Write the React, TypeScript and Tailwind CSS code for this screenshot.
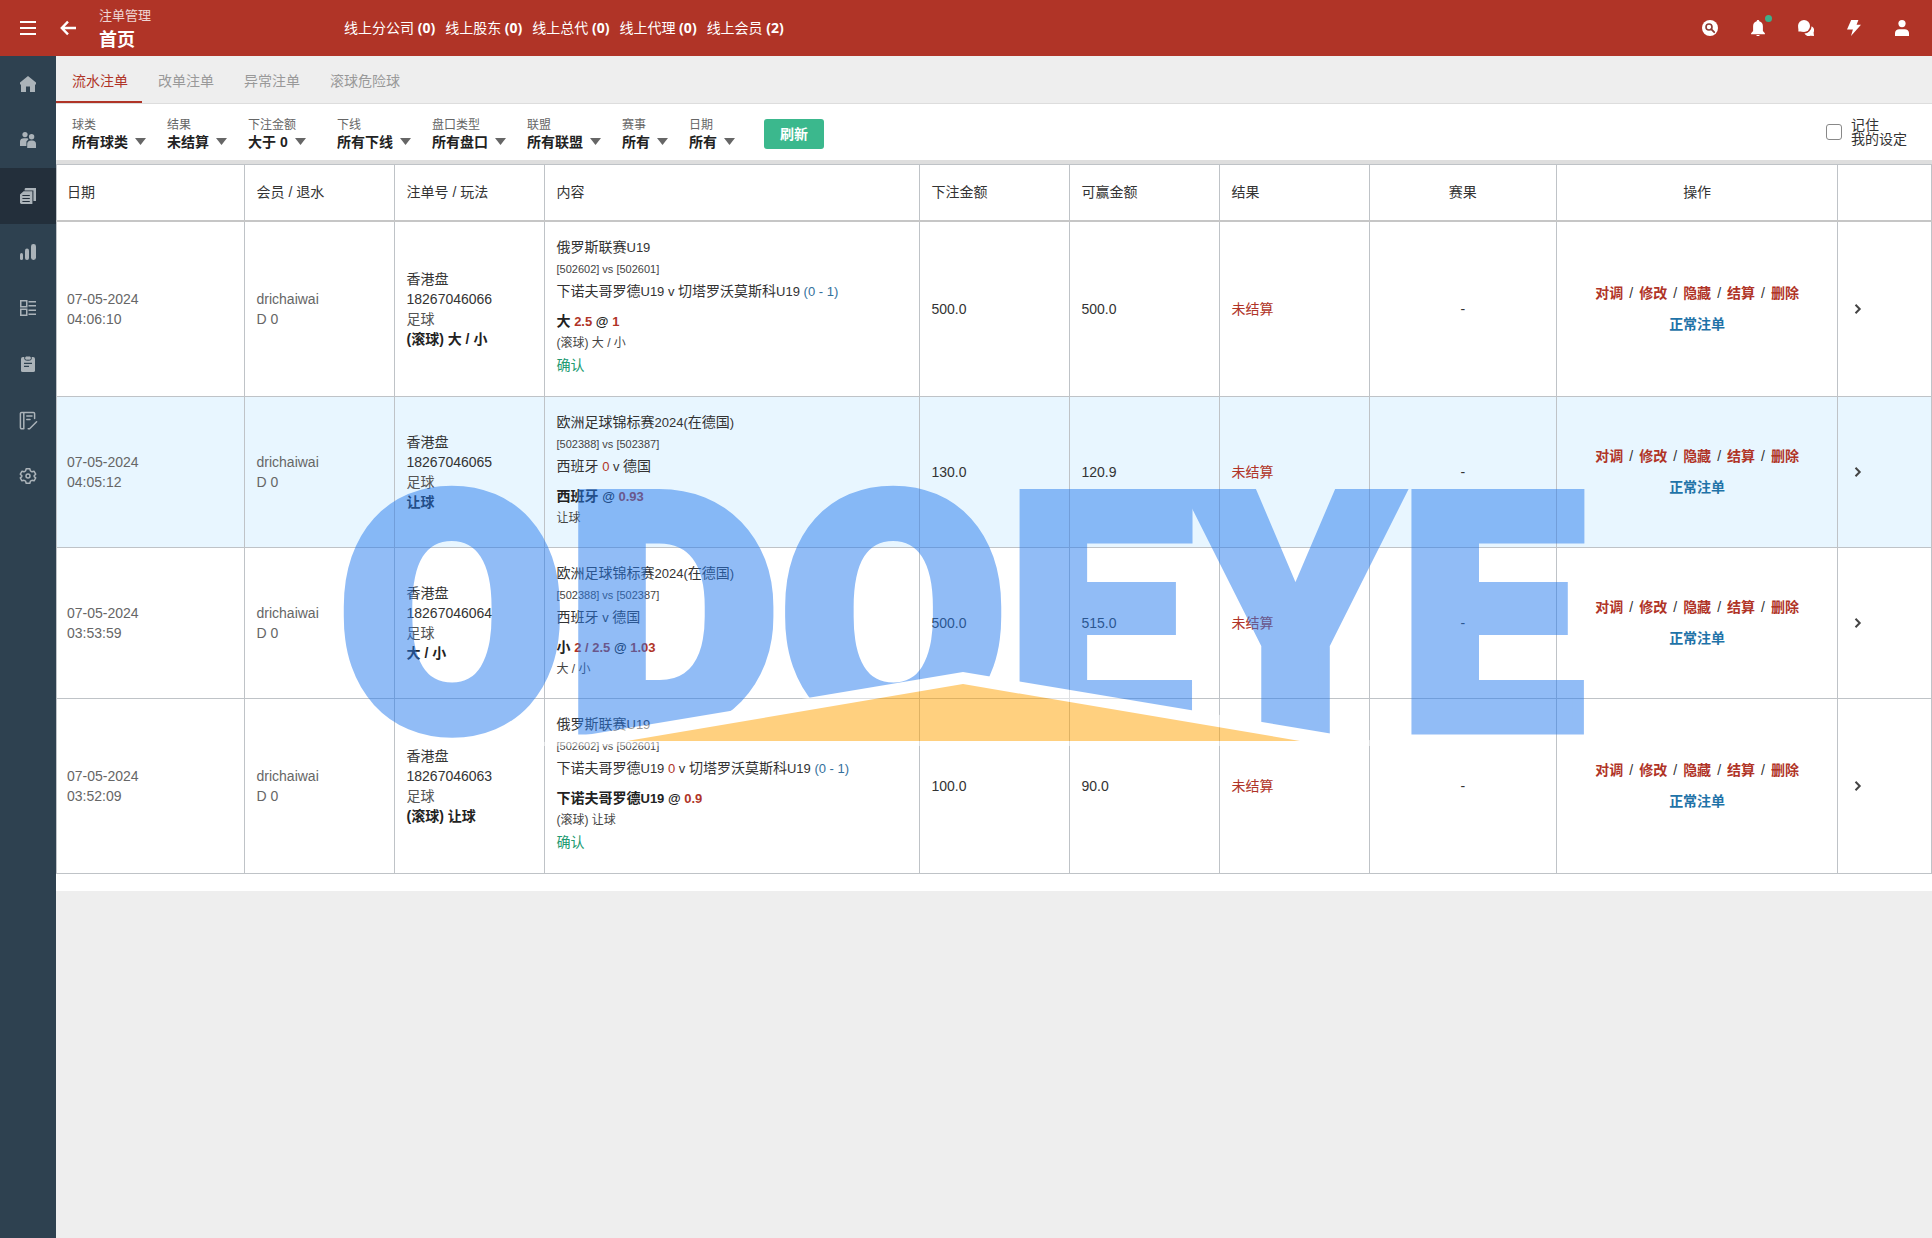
import type { ReactNode } from 'react';

const CJK = /([\u3000-\u9fff]+)/;

/* Chinese runs keep the base size, Latin runs and digits are set one step smaller. */
function Mixed({ children }: { children: string }) {
  return (
    <>
      {children.split(CJK).map((part, i) =>
        part === '' ? null : i % 2 === 1 ? (
          part
        ) : (
          <span key={i} className="text-[13px] leading-none">
            {part}
          </span>
        ),
      )}
    </>
  );
}

function Icon({ children, size = 16 }: { children: ReactNode; size?: number }) {
  return (
    <svg width={size} height={size} viewBox={`0 0 ${size} ${size}`} fill="none" aria-hidden="true">
      {children}
    </svg>
  );
}

const sideItems: { label: string; active?: boolean; icon: ReactNode }[] = [
  {
    label: '首页',
    icon: <path fill="currentColor" d="M8 0 16 6.6V8.4H15V16H10V10.5H6V16H1V8.4H0V6.6Z" />,
  },
  {
    label: '会员',
    icon: (
      <g fill="currentColor">
        <circle cx="5" cy="2.6" r="2.6" />
        <circle cx="11.6" cy="4.8" r="2.7" />
        <path d="M0 14V9.5C0 7.4 1.7 6.2 4 6.2H6.6C7.6 6.2 8.2 6.6 8.4 7.2L6.4 9.4V14Z" />
        <path d="M7.2 16V12C7.2 9.8 8.8 8.4 11 8.4H12.4C14.6 8.4 16 9.8 16 12V16Z" />
      </g>
    ),
  },
  {
    label: '注单管理',
    active: true,
    icon: (
      <g>
        <path fill="currentColor" d="M6 0H16V13H13.4V2.4H4.6V1.4A1.4 1.4 0 0 1 6 0Z" />
        <path fill="currentColor" d="M3.6 3.2H12.4V16H1.4A1.4 1.4 0 0 1 0 14.6V6.6Z" />
        <path stroke="#232f3b" strokeWidth="1" d="M2.4 7.5H9.8M2.4 10.5H9.8M2.4 13.5H9.8" />
      </g>
    ),
  },
  {
    label: '报表',
    icon: (
      <g fill="currentColor">
        <rect x="0" y="9" width="3" height="7" rx="1.5" />
        <rect x="5" y="4.5" width="4" height="11.5" rx="2" />
        <rect x="11" y="0" width="5" height="16" rx="2.4" />
      </g>
    ),
  },
  {
    label: '列表',
    icon: (
      <g stroke="currentColor" strokeWidth="1.5">
        <rect x="0.75" y="0.75" width="6" height="6" />
        <rect x="0.75" y="9.25" width="6" height="6" />
        <path d="M8.5 1.75H16M8.5 5.75H16M8.5 10.25H16M8.5 14.25H16" />
      </g>
    ),
  },
  {
    label: '记录',
    icon: (
      <g>
        <path fill="currentColor" d="M3 1H13A2 2 0 0 1 15 3V14.4A1.6 1.6 0 0 1 13.4 16H2.6A1.6 1.6 0 0 1 1 14.4V3A2 2 0 0 1 3 1Z" />
        <rect x="4.6" y="0" width="6.8" height="4.2" rx="2" fill="currentColor" stroke="#2e4150" strokeWidth="1" />
        <path stroke="#2e4150" strokeWidth="1.2" d="M4 7.4H12M4 10.4H9" />
      </g>
    ),
  },
  {
    label: '账目',
    icon: (
      <svg width="18" height="18" viewBox="0 0 18 18" overflow="visible">
        <g stroke="currentColor" strokeWidth="1.5" strokeLinecap="round" strokeLinejoin="round">
          <path d="M14.6 6.4V1.6A1.2 1.2 0 0 0 13.4 0.4H1.6A1.2 1.2 0 0 0 0.4 1.6V15.6A1.2 1.2 0 0 0 1.6 16.8H3.8V0.4M6.8 4H12M6.8 7.6H10" />
          <path d="M8.2 16.8H9.6L16.6 9.8" />
        </g>
      </svg>
    ),
  },
  {
    label: '设置',
    icon: (
      <g stroke="currentColor" strokeWidth="1.5" strokeLinejoin="round">
        <path d="M6.2 0.8H9.8L10.4 2.9 12 3.8 14.1 3.3 15.7 6.2 14.2 7.6V8.6L15.7 9.9 14.1 12.8 12 12.3 10.4 13.2 9.8 15.3H6.2L5.6 13.2 4 12.3 1.9 12.8 0.3 9.9 1.8 8.6V7.6L0.3 6.2 1.9 3.3 4 3.8 5.6 2.9Z" />
        <circle cx="8" cy="8.1" r="2" />
      </g>
    ),
  },
];

const headerIcons: { label: string; icon: ReactNode; dot?: boolean }[] = [
  {
    label: '搜索',
    icon: (
      <g>
        <circle cx="8" cy="8" r="8" fill="#fff" />
        <circle cx="7" cy="7" r="3" stroke="#8c3a33" strokeWidth="1.6" />
        <path d="M9.2 9.2 12.2 12.2" stroke="#8c3a33" strokeWidth="1.8" strokeLinecap="round" />
      </g>
    ),
  },
  {
    label: '通知',
    dot: true,
    icon: (
      <path
        fill="#fff"
        d="M8 0C8.8 0 9.3 .5 9.3 1.3 11.7 1.9 12.9 3.8 12.9 6.2V11L14.9 13.2V14.2H1.1V13.2L3.1 11V6.2C3.1 3.8 4.3 1.9 6.7 1.3 6.7 .5 7.2 0 8 0ZM6.4 15H9.6A1.6 1.3 0 0 1 6.4 15Z"
      />
    ),
  },
  {
    label: '消息',
    icon: (
      <g fill="#fff">
        <circle cx="6" cy="6" r="6" />
        <path d="M.4 7V11.6H6Z" />
        <path d="M13.6 6.2A5 5 0 0 1 15.6 12.4L16 16 12.4 15.8A5.2 5.2 0 0 1 6.4 13.6 7.6 7.6 0 0 0 13.6 6.2Z" />
      </g>
    ),
  },
  { label: '快捷', icon: <path fill="#fff" d="M5.2 0H12.4L10.6 4.8H15L5 16 6.9 9.6H1Z" /> },
  {
    label: '账户',
    icon: (
      <g fill="#fff">
        <circle cx="8" cy="3.6" r="3.6" />
        <path d="M1 16V13C1 10.6 3 9.2 5.2 9.2H10.8C13 9.2 15 10.6 15 13V16Z" />
      </g>
    ),
  },
];

const online = [
  ['线上分公司', 0],
  ['线上股东', 0],
  ['线上总代', 0],
  ['线上代理', 0],
  ['线上会员', 2],
] as const;

const tabs = ['流水注单', '改单注单', '异常注单', '滚球危险球'];

const filters = [
  { id: 'sport', label: '球类', value: '所有球类' },
  { id: 'result', label: '结果', value: '未结算' },
  { id: 'amount', label: '下注金额', value: '大于 0', wide: true },
  { id: 'downline', label: '下线', value: '所有下线' },
  { id: 'handicap', label: '盘口类型', value: '所有盘口' },
  { id: 'league', label: '联盟', value: '所有联盟' },
  { id: 'match', label: '赛事', value: '所有' },
  { id: 'date', label: '日期', value: '所有' },
];

type Bet = {
  date: string;
  time: string;
  id: string;
  play: string;
  league: string;
  codes: string;
  home: string;
  line?: string;
  away: string;
  score?: string;
  pick: string;
  pickLine?: string;
  odds: string;
  market: string;
  confirmed?: boolean;
  stake: string;
  win: string;
};

const bets: Bet[] = [
  {
    date: '07-05-2024', time: '04:06:10', id: '18267046066', play: '(滚球) 大 / 小',
    league: '俄罗斯联赛U19', codes: '[502602] vs [502601]', home: '下诺夫哥罗德U19', away: '切塔罗沃莫斯科U19', score: '(0 - 1)',
    pick: '大', pickLine: '2.5', odds: '1', market: '(滚球) 大 / 小', confirmed: true, stake: '500.0', win: '500.0',
  },
  {
    date: '07-05-2024', time: '04:05:12', id: '18267046065', play: '让球',
    league: '欧洲足球锦标赛2024(在德国)', codes: '[502388] vs [502387]', home: '西班牙', line: '0', away: '德国',
    pick: '西班牙', odds: '0.93', market: '让球', stake: '130.0', win: '120.9',
  },
  {
    date: '07-05-2024', time: '03:53:59', id: '18267046064', play: '大 / 小',
    league: '欧洲足球锦标赛2024(在德国)', codes: '[502388] vs [502387]', home: '西班牙', away: '德国',
    pick: '小', pickLine: '2 / 2.5', odds: '1.03', market: '大 / 小', stake: '500.0', win: '515.0',
  },
  {
    date: '07-05-2024', time: '03:52:09', id: '18267046063', play: '(滚球) 让球',
    league: '俄罗斯联赛U19', codes: '[502602] vs [502601]', home: '下诺夫哥罗德U19', line: '0', away: '切塔罗沃莫斯科U19', score: '(0 - 1)',
    pick: '下诺夫哥罗德U19', odds: '0.9', market: '(滚球) 让球', confirmed: true, stake: '100.0', win: '90.0',
  },
];

const actions = ['对调', '修改', '隐藏', '结算', '删除'];

function Header() {
  return (
    <header className="flex h-14 shrink-0 items-center bg-[#b03427] text-white">
      <button type="button" aria-label="菜单" className="flex h-14 w-14 items-center justify-center">
        <Icon>
          <path stroke="#fff" strokeWidth="2" d="M0 2H16M0 8H16M0 14H16" />
        </Icon>
      </button>
      <button type="button" aria-label="返回" className="flex h-14 w-6 items-center justify-center">
        <Icon>
          <path stroke="#fff" strokeWidth="2.4" d="M16 8H1.8M8 1.6 1.8 8 8 14.4" />
        </Icon>
      </button>
      <div className="ml-[19px] w-[245px]">
        <div className="text-[13px] leading-6 text-white/80">注单管理</div>
        <h1 className="text-lg leading-6 font-bold">首页</h1>
      </div>
      <nav className="flex gap-[10px] font-['Open_Sans','Noto_Sans_CJK_SC',sans-serif] text-sm">
        {online.map(([name, count]) => (
          <a key={name} href="#" className="whitespace-nowrap">
            {name} <b>({count})</b>
          </a>
        ))}
      </nav>
      <div className="ml-auto flex pr-[6px]">
        {headerIcons.map(({ label, icon, dot }) => (
          <button key={label} type="button" aria-label={label} className="relative flex h-14 w-12 items-center justify-center">
            <Icon>{icon}</Icon>
            {dot && <span className="absolute top-[15px] right-[10px] h-[7px] w-[7px] rounded-full bg-[#3fae8a]" />}
          </button>
        ))}
      </div>
    </header>
  );
}

function Sidebar() {
  return (
    <nav className="flex w-14 shrink-0 flex-col bg-[#2e4150] text-[#abb3b9]">
      {sideItems.map(({ label, active, icon }) => (
        <a
          key={label}
          href="#"
          aria-label={label}
          className={`flex h-14 items-center justify-center [&>svg]:overflow-visible ${active ? 'bg-[#232f3b]' : ''}`}
        >
          <Icon>{icon}</Icon>
        </a>
      ))}
    </nav>
  );
}

function Filters() {
  return (
    <div className="flex h-[60px] items-center border-b-4 border-[#dedede] bg-white pr-[25px] pl-4">
      <div className="flex items-center pt-1">
        {filters.map(({ id, label, value, wide }) => (
          <div key={id} className={wide ? 'mr-[31px]' : 'mr-[21px]'}>
            <label htmlFor={id} className="block text-xs leading-4 text-[#666]">
              {label}
            </label>
            <div className="relative w-fit">
              <select id={id} className="block h-[18px] appearance-none pr-[18px] text-sm leading-[18px] font-bold text-[#222]">
                <option>{value}</option>
              </select>
              <svg width="11" height="7" viewBox="0 0 11 7" aria-hidden="true" className="pointer-events-none absolute top-[5px] right-0 fill-[#666]">
                <path d="M0 0H11L5.5 7Z" />
              </svg>
            </div>
          </div>
        ))}
        <button type="button" className="ml-2 h-[30px] w-[60px] rounded-[3px] bg-[#3bb88d] text-sm font-bold text-white">
          刷新
        </button>
      </div>
      <label className="ml-auto flex items-center gap-[9px] text-sm leading-[14px] text-[#333]">
        <input type="checkbox" className="h-4 w-4 appearance-none rounded-[3px] border border-[#888] bg-white" />
        <span>
          记住
          <br />
          我的设定
        </span>
      </label>
    </div>
  );
}

function BetContent({ bet }: { bet: Bet }) {
  return (
    <div className="pt-[14px] pb-[18px] leading-[22px]">
      <p><Mixed>{bet.league}</Mixed></p>
      <p className="text-[11px] leading-[22px] text-[#444]">{bet.codes}</p>
      <p>
        <Mixed>{`${bet.home} `}</Mixed>
        {bet.line && <span className="text-[13px] leading-none text-[#b03427]">{bet.line} </span>}
        <Mixed>{`v ${bet.away} `}</Mixed>
        {bet.score && <span className="text-[13px] leading-none text-[#33709c]">{bet.score}</span>}
      </p>
      <p className="mt-2 font-bold text-[#222]">
        <Mixed>{`${bet.pick} `}</Mixed>
        {bet.pickLine && <span className="text-[13px] leading-none text-[#b03427]">{bet.pickLine} </span>}
        <Mixed>{'@ '}</Mixed>
        <span className="text-[13px] leading-none text-[#b03427]">{bet.odds}</span>
      </p>
      <p className="text-xs leading-[22px] text-[#444]">{bet.market}</p>
      {bet.confirmed && <p className="mb-[2px] text-[#219a70]">确认</p>}
    </div>
  );
}

const cell = 'border border-[#bfc3c7] px-3 py-0 first:pl-[10px]';

function BetTable() {
  return (
    <table className="w-full table-fixed border-collapse text-left text-sm text-[#333]">
      <colgroup>
        <col className="w-[10%]" />
        <col className="w-[8%]" />
        <col className="w-[8%]" />
        <col className="w-[20%]" />
        <col className="w-[8%]" />
        <col className="w-[8%]" />
        <col className="w-[8%]" />
        <col className="w-[10%]" />
        <col className="w-[15%]" />
        <col className="w-[5%]" />
      </colgroup>
      <thead>
        <tr className="h-14 border-b-2 border-[#c6c6c6]">
          {['日期', '会员 / 退水', '注单号 / 玩法', '内容', '下注金额', '可赢金额', '结果'].map((name) => (
            <th key={name} className={`${cell} font-normal`}>
              {name}
            </th>
          ))}
          <th className={`${cell} text-center font-normal`}>赛果</th>
          <th className={`${cell} text-center font-normal`}>操作</th>
          <th className={cell} aria-label="详情" />
        </tr>
      </thead>
      <tbody>
        {bets.map((bet, i) => (
          <tr key={bet.id} className={i === 1 ? 'bg-[#e8f6ff]' : 'bg-white'}>
            <td className={`${cell} leading-5 text-[#666]`}>
              {bet.date}
              <br />
              {bet.time}
            </td>
            <td className={`${cell} leading-5 text-[#666]`}>
              drichaiwai
              <br />D 0
            </td>
            <td className={`${cell} leading-5`}>
              <p>香港盘</p>
              <p>{bet.id}</p>
              <p className="text-[#555]">足球</p>
              <p className="font-bold text-[#222]">{bet.play}</p>
            </td>
            <td className={cell}>
              <BetContent bet={bet} />
            </td>
            <td className={cell}>{bet.stake}</td>
            <td className={cell}>{bet.win}</td>
            <td className={`${cell} text-[#b03427]`}>未结算</td>
            <td className={`${cell} text-center`}>-</td>
            <td className={`${cell} text-center font-bold`}>
              <div className="flex justify-center gap-[6px] leading-5">
                {actions.map((name, j) => (
                  <span key={name} className="flex gap-[6px]">
                    {j > 0 && <span className="font-normal">/</span>}
                    <button type="button" className="text-[#b03427]">
                      {name}
                    </button>
                  </span>
                ))}
              </div>
              <button type="button" className="mt-[11px] leading-5 text-[#1f73a8]">
                正常注单
              </button>
            </td>
            <td className={cell}>
              <button type="button" aria-label="展开" className="flex h-6 w-4 items-center justify-center">
                <svg width="8" height="10" viewBox="0 0 8 10" fill="none" stroke="#444" strokeWidth="2" aria-hidden="true">
                  <path d="M1.5 .8 5.7 5 1.5 9.2" />
                </svg>
              </button>
            </td>
          </tr>
        ))}
      </tbody>
    </table>
  );
}

function Watermark() {
  return (
    <div className="pointer-events-none fixed inset-0 flex items-center justify-center">
      <svg viewBox="344 482 1244 274" className="w-[1244px] max-w-full overflow-visible opacity-50" role="img" aria-label="ODOEYE">
        <text
          x="338"
          y="729"
          fill="#257bed"
          stroke="#257bed"
          strokeWidth="11"
          className="font-['Roboto',sans-serif] text-[330px] font-black"
        >
          ODOEYE
        </text>
        <path fill="#fff" d="M963 672 1405 746H520Z" />
        <path fill="#ffa101" d="M963 684 1300 741H627Z" />
      </svg>
    </div>
  );
}

export default function App() {
  return (
    <div className="flex min-h-screen flex-col bg-[#eee] font-['Liberation_Sans','Noto_Sans_CJK_SC',sans-serif] text-[#333]" lang="zh-CN">
      <Header />
      <div className="flex grow">
        <Sidebar />
        <main className="min-w-0 grow">
          <div className="flex h-12 border-b border-[#ddd] text-sm text-[#999]" role="tablist">
            {tabs.map((name, i) => (
              <button
                key={name}
                type="button"
                role="tab"
                aria-selected={i === 0}
                className={`border-b-2 pt-1 pr-[14px] pl-4 ${i === 0 ? 'border-[#b03427] text-[#b03427]' : 'border-transparent'}`}
              >
                {name}
              </button>
            ))}
          </div>
          <Filters />
          <div className="bg-white pb-[17px]">
            <BetTable />
          </div>
        </main>
      </div>
      <Watermark />
    </div>
  );
}
